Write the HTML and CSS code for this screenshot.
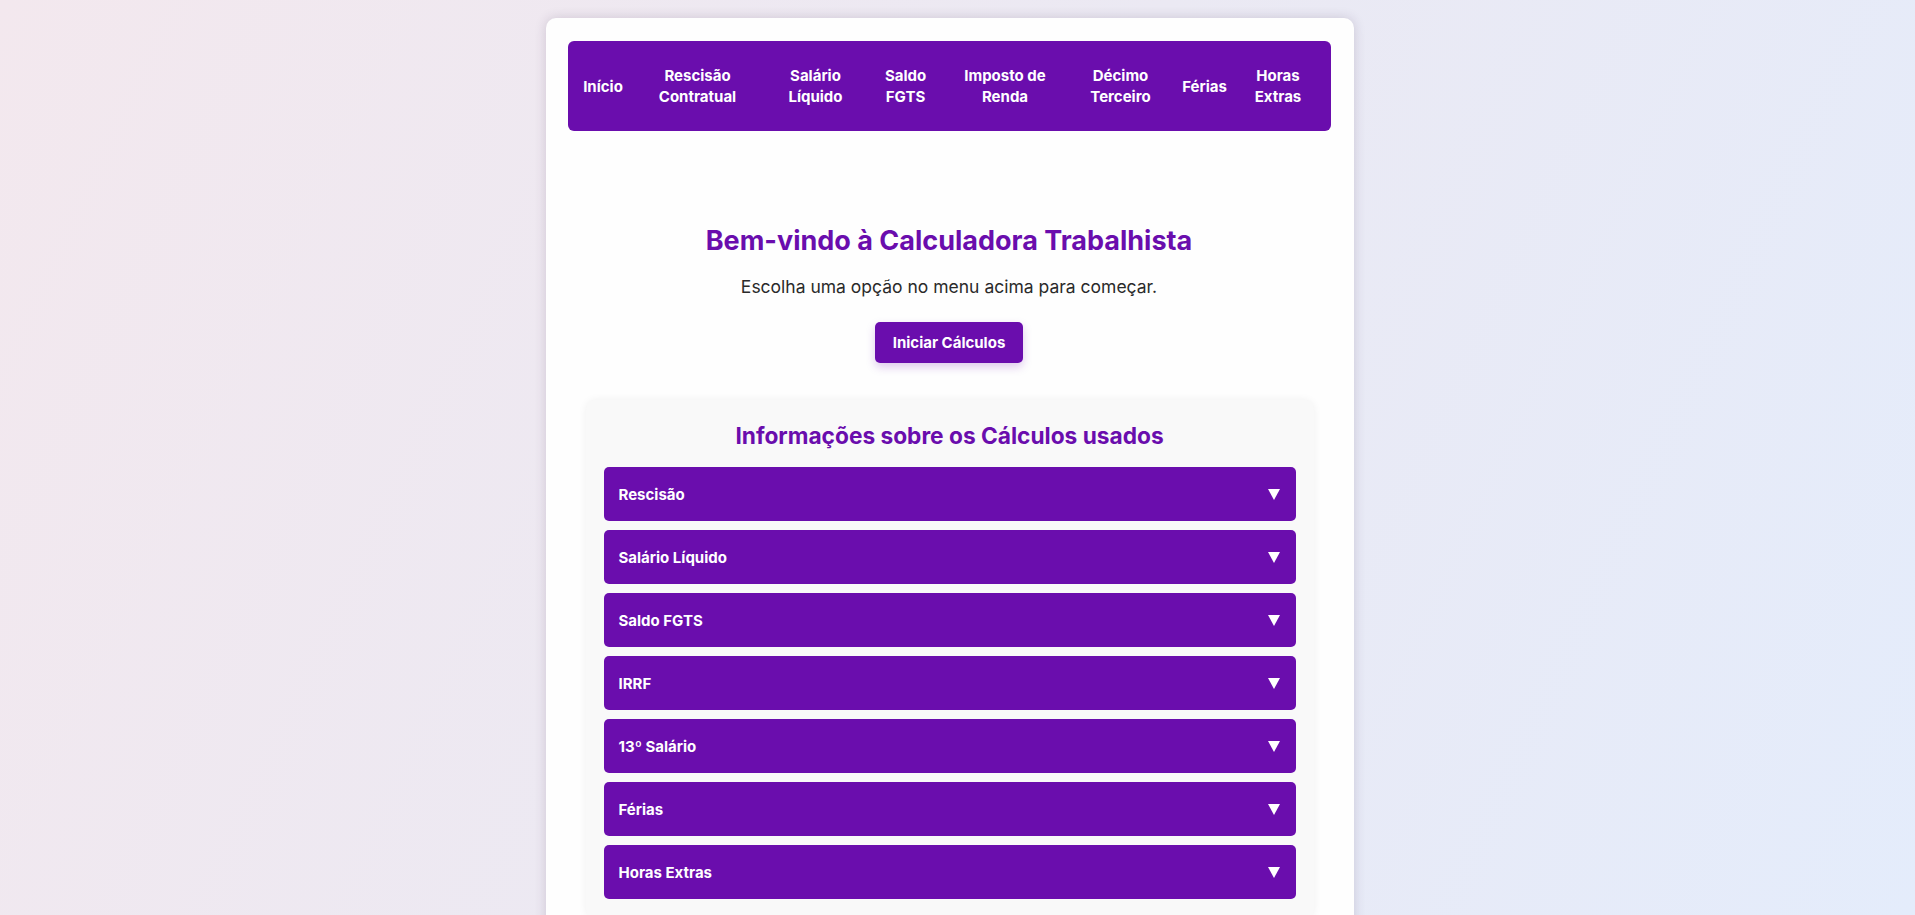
FILE: index.html
```html
<!DOCTYPE html>
<html lang="pt-BR">
<head>
<meta charset="utf-8">
<title>Calculadora Trabalhista</title>
<link rel="stylesheet" href="styles.css">
</head>
<body>
<div class="container">
  <nav class="nav">
    <a href="#">Início</a>
    <a href="#">Rescisão<br>Contratual</a>
    <a href="#">Salário<br>Líquido</a>
    <a href="#">Saldo<br>FGTS</a>
    <a href="#">Imposto de<br>Renda</a>
    <a href="#">Décimo<br>Terceiro</a>
    <a href="#">Férias</a>
    <a href="#">Horas<br>Extras</a>
  </nav>

  <section class="welcome">
    <h2 class="welcome-title">Bem-vindo à Calculadora Trabalhista</h2>
    <p class="welcome-text">Escolha uma opção no menu acima para começar.</p>
    <button class="btn" type="button">Iniciar Cálculos</button>
  </section>

  <section class="info">
    <h3 class="info-title">Informações sobre os Cálculos usados</h3>
    <div class="accordion">
      <button class="acc-item" type="button"><span>Rescisão</span><span class="arrow"></span></button>
      <button class="acc-item" type="button"><span>Salário Líquido</span><span class="arrow"></span></button>
      <button class="acc-item" type="button"><span>Saldo FGTS</span><span class="arrow"></span></button>
      <button class="acc-item" type="button"><span>IRRF</span><span class="arrow"></span></button>
      <button class="acc-item" type="button"><span>13º Salário</span><span class="arrow"></span></button>
      <button class="acc-item" type="button"><span>Férias</span><span class="arrow"></span></button>
      <button class="acc-item" type="button"><span>Horas Extras</span><span class="arrow"></span></button>
    </div>
  </section>
</div>
</body>
</html>
```

FILE: styles.css
```css
* {
  box-sizing: border-box;
}

html, body {
  margin: 0;
}

body {
  padding: 18px 16px 110px 0;
  font-family: "Inter", "Open Sans", sans-serif;
  background: linear-gradient(115deg, #f3e8ee 0%, #ebe9f3 50%, #e4ecfb 100%);
  background-attachment: fixed;
  color: #333;
}

.container {
  width: 808px;
  margin: 0 auto;
  background: #fefefe;
  border-radius: 10px;
  box-shadow: 0 0 12px rgba(60, 40, 80, 0.18);
  padding: 23px 23px 24px 22px;
}

/* ---------- navigation ---------- */
.nav {
  height: 90px;
  background: #6a0dad;
  border-radius: 6px;
  display: grid;
  grid-template-columns: 71px 118px 118px 62px 137px 94px 74px 73px;
  align-items: center;
}

.nav a {
  color: #fff;
  text-decoration: none;
  font-weight: 700;
  font-size: 15px;
  line-height: 21px;
  text-align: center;
}

/* ---------- welcome ---------- */
.welcome {
  padding-top: 95px;
  text-align: center;
}

.welcome-title {
  margin: 0;
  font-size: 27px;
  line-height: 30px;
  font-weight: 700;
  color: #6a0dad;
}

.welcome-text {
  margin: 19px 0 0;
  font-size: 17.5px;
  line-height: 24px;
  color: #2a2a2a;
}

.btn {
  margin-top: 23px;
  border: none;
  background: #6a0dad;
  color: #fff;
  font-family: inherit;
  font-weight: 700;
  font-size: 15px;
  line-height: 21px;
  padding: 10px 18px;
  border-radius: 5px;
  box-shadow: 0 4px 10px rgba(106, 13, 173, 0.22);
  cursor: pointer;
}

/* ---------- info / accordion ---------- */
.info {
  margin: 37px 17px 0 18px;
  background: #f9f9f9;
  border-radius: 10px;
  box-shadow: 0 0 8px rgba(0, 0, 0, 0.06);
  padding: 21px 18px 20px;
}

.info-title {
  margin: 0;
  text-align: center;
  font-size: 22.7px;
  line-height: 30px;
  font-weight: 700;
  color: #6a0dad;
}

.accordion {
  margin-top: 16px;
  display: flex;
  flex-direction: column;
  gap: 9px;
}

.acc-item {
  height: 54px;
  width: 100%;
  border: none;
  border-radius: 5px;
  background: #6a0dad;
  color: #fff;
  font-family: inherit;
  font-weight: 700;
  font-size: 15px;
  display: flex;
  align-items: center;
  justify-content: space-between;
  padding: 0 16px 0 15px;
  text-align: left;
  cursor: pointer;
}

.arrow {
  width: 0;
  height: 0;
  border-left: 6px solid transparent;
  border-right: 6px solid transparent;
  border-top: 11px solid #fff;
}
```
